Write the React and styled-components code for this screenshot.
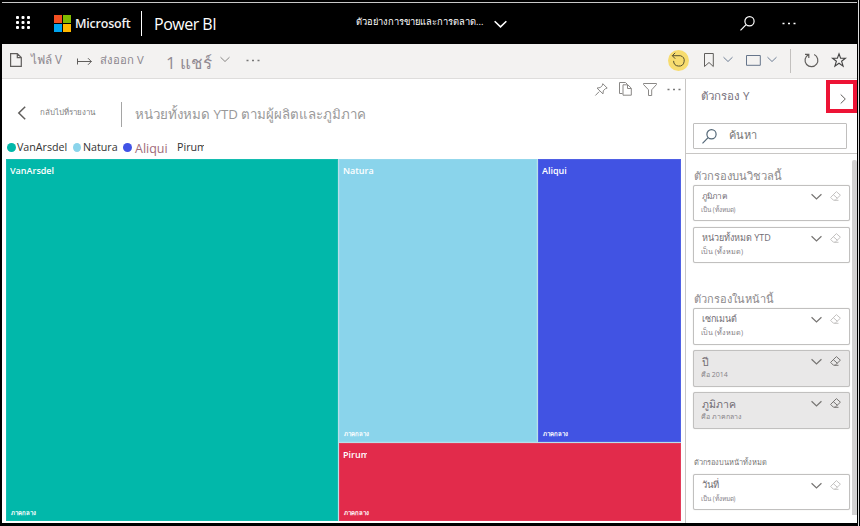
import React from 'react';
import styled, { createGlobalStyle } from 'styled-components';

const Global = createGlobalStyle`
  * { box-sizing: border-box; }
  body { margin: 0; background: #000; overflow: hidden; }
`;

const Label = styled.span`
  display: block;
  flex: none;
  width: ${p => p.$w}px;
  height: ${p => p.$h || 16}px;
  line-height: ${p => p.$h || 16}px;
  margin: ${p => p.$m || '0'};
  font-family: "Open Sans", "Noto Sans", sans-serif;
  font-size: ${p => p.$size || 12}px;
  font-weight: ${p => p.$weight || 400};
  letter-spacing: ${p => p.$track || 0}px;
  color: ${p => p.$color || '#777'};
  white-space: nowrap;
  overflow: ${p => (p.$clip ? 'hidden' : 'visible')};
`;
const Icon = styled.svg`
  display: block;
  flex: none;
  margin: ${p => p.$m || '0'};
  fill: none;
  stroke: ${p => p.$color || '#605e5c'};
  stroke-width: ${p => p.$stroke || 1};
  overflow: visible;
`;
const Frame = styled.div`
  width: 860px;
  height: 526px;
  padding: 2px 3px 3px 2px;
  background: linear-gradient(90deg, #000 858px, #ddd 858px, #ddd 859px, #000 859px);
  display: flex;
  flex-direction: column;
`;
const Header = styled.header`
  height: 42px;
  display: flex;
  align-items: flex-start;
  background: #000;
  border-top: 1px solid #c8c8c8;
`;
const Toolbar = styled.div`
  height: 35px;
  display: flex;
  align-items: flex-start;
  background: #f3f2f1;
  border-bottom: 1px solid #dedddc;
`;
const Rule = styled.div`
  flex: none;
  width: 1px;
  height: ${p => p.$h}px;
  margin: ${p => p.$m};
  background: ${p => p.$color};
`;
const LogoGrid = styled.div`
  display: grid;
  flex: none;
  grid-template-columns: 8px 8px;
  grid-template-rows: 8px 8px;
  gap: 1px;
  margin: 12px 0 0 23px;
`;
const Tile = styled.i` background: ${p => p.$color}; `;
const Body = styled.div`
  flex: 1;
  min-height: 0;
  display: flex;
  background: #fff;
`;
const Report = styled.main`
  width: 683px;
  flex: none;
  padding: 0 4px 2px;
`;
const Actions = styled.div`
  height: 21px;
  display: flex;
  padding-left: 588px;
`;
const TitleRow = styled.div`
  height: 39px;
  display: flex;
  align-items: flex-start;
`;
const Legend = styled.div`
  height: 20px;
  display: flex;
  align-items: flex-start;
`;
const Dot = styled.i`
  flex: none;
  width: ${p => p.$w || 9}px;
  height: 9px;
  margin: ${p => p.$m};
  border-radius: 50%;
  background: ${p => p.$color};
`;
const TreeMap = styled.div`
  width: 675px;
  height: 362px;
  display: grid;
  grid-template-columns: 332px 198px 143px;
  grid-template-rows: 283px 78px;
  gap: 1px;
  background: #b9dfe9;
`;
const Region = styled.section`
  display: flex;
  flex-direction: column;
  justify-content: space-between;
  padding: 4px 4px 0;
  background: ${p => p.$color};
  box-shadow: inset 0 0 0 1px rgba(255, 255, 255, 0.08);
  grid-column: ${p => p.$col};
  grid-row: ${p => p.$row};
`;
const Pane = styled.aside`
  flex: 1;
  border-left: 1px solid #c8c6c4;
`;
const PaneTop = styled.div`
  height: 75px;
  border-bottom: 1px solid #c8c6c4;
`;
const PaneTitle = styled.div`
  height: 44px;
  display: flex;
  justify-content: space-between;
  padding: 1px 0 0 15px;
`;
const Collapse = styled.button`
  width: 31px;
  height: 33px;
  padding: 5px 0 0 10px;
  display: flex;
  align-items: center;
  border: 4px solid #ed1335;
  background: #fff;
`;
const Search = styled.div`
  width: 154px;
  height: 26px;
  margin-left: 7px;
  display: flex;
  border: 1px solid #c0bfbe;
  border-radius: 1px;
`;
const FilterScroll = styled.div`
  display: flex;
  height: 369px;
  justify-content: space-between;
  padding: 6px 0 7px 7px;
`;
const Scrollbar = styled.div`
  width: 5px;
  height: 355px;
  background: #d2d1d1;
  border-radius: 2px 2px 0 0;
`;
const Filters = styled.div` width: 157px; `;
const Section = styled.section`
  height: ${p => p.$h}px;
  display: flex;
  flex-direction: column;
`;
const Card = styled.article`
  flex: none;
  height: ${p => p.$h || 36}px;
  margin-bottom: ${p => p.$gap || 0}px;
  padding: 2px 8px 0 7px;
  border: 1px solid #c1c0bf;
  border-radius: 2px;
  background: ${p => (p.$active ? '#e9e8e8' : '#fff')};
  box-shadow: 0 0 1px #c8c6c4;
`;
const CardRow = styled.div`
  display: flex;
  height: 16px;
`;

const Chevron = ({ m, color, w = 10, stroke }) => (
  <Icon $m={m} $color={color} $stroke={stroke} width={w} height={w / 2} viewBox="0 0 10 5"><path d="m.5 .2 4.5 4.3L9.5.2" /></Icon>
);
const Dots = ({ m, color }) => (
  <Icon $m={m} $color={color} width="14" height="3" viewBox="0 0 14 3"><path d="M.5 1.5h2m3.5 0h2m3.5 0h2" strokeWidth="1.7" /></Icon>
);
const Magnifier = ({ m, color }) => (
  <Icon $m={m} $color={color} $stroke="1.2" width="15" height="15" viewBox="0 0 15 15"><circle cx="9.5" cy="5.3" r="4.6" /><path d="m6.1 8.6-5.6 5.8" /></Icon>
);
const Eraser = ({ color }) => (
  <Icon $m="3px 0 0 8px" $color={color} width="11" height="10" viewBox="0 0 11 10"><path d="m6.4.6 4 3.6-5.2 5H3.4L.6 6.4ZM3.2 3.5l4.2 3.8M4.5 9.3h4" /></Icon>
);

const FilterCard = ({ title, detail, w, dw, size = 9, dsize = 7, active, gap, h, drop = 0 }) => (
  <Card $active={active} $gap={gap} $h={h}>
    <CardRow>
      <Label $w={w} $size={size} $m={`${drop}px ${112 - w}px 0 1px`} $color="#716d74">{title}</Label>
      <Chevron m="6px 0 0 -3px" color="#777573" w={11} stroke="1.1" />
      <Eraser color={active ? '#777573' : '#c4c2c1'} />
    </CardRow>
    <Label $w={dw} $size={dsize} $h={11} $color="#858287">{detail}</Label>
  </Card>
);

const TreeRegion = ({ name, w = 60, ...rest }) => (
  <Region {...rest}>
    <Label $w={w} $size={9} $weight={600} $clip $color="#fff">{name}</Label>
    <Label $w={30} $size={6} $h={15} $m="0 0 0 1px" $weight={600} $color="#fff">ภาคกลาง</Label>
  </Region>
);

export default function App() {
  return (
    <>
      <Global />
      <Frame>
        <Header>
          <Icon $m="13px 0 0 14px" width="15" height="14" viewBox="0 0 15 14" $color="none">
            {[0, 5, 10].flatMap(y => [0, 5.5, 11].map(x => <rect key={`${x}-${y}`} x={x} y={y} width="3" height="3" rx="1" fill="#fff" />))}
          </Icon>
          <LogoGrid><Tile $color="#f25022" /><Tile $color="#7fba00" /><Tile $color="#00a4ef" /><Tile $color="#ffb900" /></LogoGrid>
          <Label $w={56} $size={12.5} $h={20} $weight={600} $track={-0.2} $m="11px 0 0 4px" $color="#f2f2f2">Microsoft</Label>
          <Rule $h={25} $m="8px 0 0 10px" $color="#fff" />
          <Label $w={62} $size={16} $h={22} $m="10px 0 0 12px" $track={-0.5} $color="#fff">Power BI</Label>
          <Label $w={128} $size={9.35} $m="11px 0 0 140px" $color="#fff">ตัวอย่างการขายและการตลาด...</Label>
          <Chevron m="18px 0 0 10px" w={13} color="#fff" stroke="1.2" />
          <Magnifier m="13px 0 0 233px" color="#fff" />
          <Dots m="19px 0 0 27px" color="#fff" />
        </Header>
        <Toolbar>
          <Icon $m="9px 0 0 8px" width="12" height="14" viewBox="0 0 12 14" $stroke="1.2"><path d="M.6.6h6.7l4 4v8.8H.6ZM7.3.6v4h4" /></Icon>
          <Label $w={31} $size={11.7} $m="7px 0 0 9px" $color="#8b858d">ไฟล์ V</Label>
          <Icon $m="13px 0 0 15px" width="15" height="9" viewBox="0 0 15 9"><path d="M.5 1.5v6M1 4.5h13.5M11 1.2l3.3 3.3L11 7.8" /></Icon>
          <Label $w={43} $size={11.3} $m="8px 0 0 8px" $color="#8b858d">ส่งออก V</Label>
          <Label $w={46} $size={17} $h={24} $m="7px 0 0 23px" $color="#918a93" $weight={500}>1 แชร์</Label>
          <Chevron m="13px 0 0 8px" color="#8a8886" />
          <Dots m="15px 0 0 16px" color="#777" />
          <Icon $m="6px 0 0 408px" width="21" height="21" viewBox="0 0 21 21" $color="#55502f"><circle cx="10.5" cy="10.5" r="10.5" fill="#f7dc6f" stroke="none" /><path d="M4.4 5.7h8a5.3 5.3 0 1 1-6.8 5.2M7.2 2.8 4.3 5.7l2.9 3" /></Icon>
          <Icon $m="9px 0 0 15px" width="10" height="14" viewBox="0 0 10 14"><path d="M.5.5h8.8v13L5 9.5l-4.5 4Z" /></Icon>
          <Chevron m="13px 0 0 9px" color="#6f7f96" />
          <Icon $m="11px 0 0 13px" width="15" height="11" viewBox="0 0 15 11" $color="#66758b"><path d="M.5.5h13.8v9.8H.5Z" /></Icon>
          <Chevron m="13px 0 0 6px" color="#6f7f96" />
          <Rule $h={24} $m="5px 0 0 13px" $color="#c2c0be" />
          <Icon $m="9px 0 0 13px" width="15" height="15" viewBox="0 0 15 15" $stroke="1.2"><path d="M10.2 1.5A6.4 6.4 0 1 1 4.3 1.7M1 1.3h3.8v3.8" /></Icon>
          <Icon $m="9px 0 0 13px" width="14" height="14" viewBox="0 0 14 14" $stroke="1.1" $color="#444"><path d="m7 .8 1.6 4.5h4.8L9.6 8.2l1.5 4.9L7 10.2l-4.1 2.9 1.5-4.9L.6 5.3h4.8Z" /></Icon>
        </Toolbar>
        <Body>
          <Report>
            <Actions>
              <Icon $m="4px 0 0 1px" width="13" height="13" viewBox="0 0 13 13" $color="#8a8886"><path d="m7.8.7 4.4 4.4-1.7.5-2.2 2.2-.3 3.1-6-5.8 3.4-.6L7.4 2.3ZM4.2 8.6.4 12.5" /></Icon>
              <Icon $m="3px 0 0 11px" width="13" height="14" viewBox="0 0 13 14" $color="#8a8886"><path d="M3.5 11.5h-3V.5h6l2 2M4 2.8h4.8l3.5 3.4v7H4ZM8.5 3v3.5H12" /></Icon>
              <Icon $m="4px 0 0 11px" width="14" height="13" viewBox="0 0 14 13" $color="#8a8886"><path d="M.5.5h13v1L8.7 6.8v5.7H5.5V6.8L.5 1.5Z" /></Icon>
              <Dots m="9px 0 0 10px" color="#777" />
            </Actions>
            <TitleRow>
              <Icon $m="6px 0 0 12px" width="8" height="14" viewBox="0 0 8 14" $stroke="1.5"><path d="M7.2.7.8 7l6.4 6.3" /></Icon>
              <Label $w={55} $size={7.9} $m="4px 0 0 14px" $color="#7d7d7d">กลับไปที่รายงาน</Label>
              <Rule $h={25} $m="2px 0 0 26px" $color="#a5a5a5" />
              <Label $w={234} $size={13.3} $h={24} $m="2px 0 0 13px" $color="#999">หน่วยทั้งหมด YTD ตามผู้ผลิตและภูมิภาค</Label>
            </TitleRow>
            <Legend>
              <Dot $color="#01b8aa" $m="4px 1px 0 1px" />
              <Label $w={51} $size={10.7} $color="#333">VanArsdel</Label>
              <Dot $color="#8ad4eb" $w={8} $m="4px 2px 0 5px" />
              <Label $w={37} $size={10.7} $color="#333">Natura</Label>
              <Dot $color="#4153e6" $m="4px 3px 0 3px" />
              <Label $w={33} $size={12.5} $m="2px 0 0" $color="#a06b78">Aliqui</Label>
              <Label $w={27} $size={10.7} $m="0 0 0 9px" $clip $color="#333">Pirum</Label>
            </Legend>
            <TreeMap>
              <TreeRegion name="VanArsdel" $color="#01b8aa" $col="1" $row="1 / 3" />
              <TreeRegion name="Natura" $color="#8ad4eb" $col="2" $row="1" />
              <TreeRegion name="Aliqui" $color="#4153e3" $col="3" $row="1" />
              <TreeRegion name="Pirum" w={24} $color="#e22b4b" $col="2 / 4" $row="2" />
            </TreeMap>
          </Report>
          <Pane>
            <PaneTop>
              <PaneTitle>
                <Label $w={49} $size={11.5} $m="8px 0 0" $color="#77717c">ตัวกรอง Y</Label>
                <Collapse aria-label="ย่อ"><Icon width="6" height="10" viewBox="0 0 6 10"><path d="m.7.5 4.6 4.5L.7 9.5" /></Icon></Collapse>
              </PaneTitle>
              <Search><Magnifier m="5px 0 0 8px" color="#536777" /><Label $w={28} $size={11} $m="3px 0 0 12px">ค้นหา</Label></Search>
            </PaneTop>
            <FilterScroll>
              <Filters>
                <Section $h={123}>
                  <Label $w={85} $size={11.2} $m="8px 0 1px 1px" $color="#8c898c">ตัวกรองบนวิชวลนี้</Label>
                  <FilterCard title="ภูมิภาค" detail="เป็น (ทั้งหมด)" w={26} dw={36} dsize={6.4} size={8.3} gap={6} />
                  <FilterCard title="หน่วยทั้งหมด YTD" detail="เป็น (ทั้งหมด)" w={70} dw={42} dsize={7.2} />
                </Section>
                <Section $h={166}>
                  <Label $w={79} $size={11} $m="8px 0 1px 1px" $color="#8c898c">ตัวกรองในหน้านี้</Label>
                  <FilterCard title="เซกเมนต์" detail="เป็น (ทั้งหมด)" w={33} dw={42} dsize={7.2} h={37} gap={5} />
                  <FilterCard title="ปี" detail="คือ 2014" w={8} dw={27} size={10.5} drop={1} active h={37} gap={5} />
                  <FilterCard title="ภูมิภาค" detail="คือ ภาคกลาง" w={33} dw={40} size={10.5} drop={1} active h={37} />
                </Section>
                <Section $h={66}>
                  <Label $w={69} $size={7.4} $m="5px 0 4px 1px">ตัวกรองบนหน้าทั้งหมด</Label>
                  <FilterCard title="วันที่" detail="เป็น (ทั้งหมด)" w={18} dw={36} dsize={6.4} size={9.5} />
                </Section>
              </Filters>
              <Scrollbar />
            </FilterScroll>
          </Pane>
        </Body>
      </Frame>
    </>
  );
}
